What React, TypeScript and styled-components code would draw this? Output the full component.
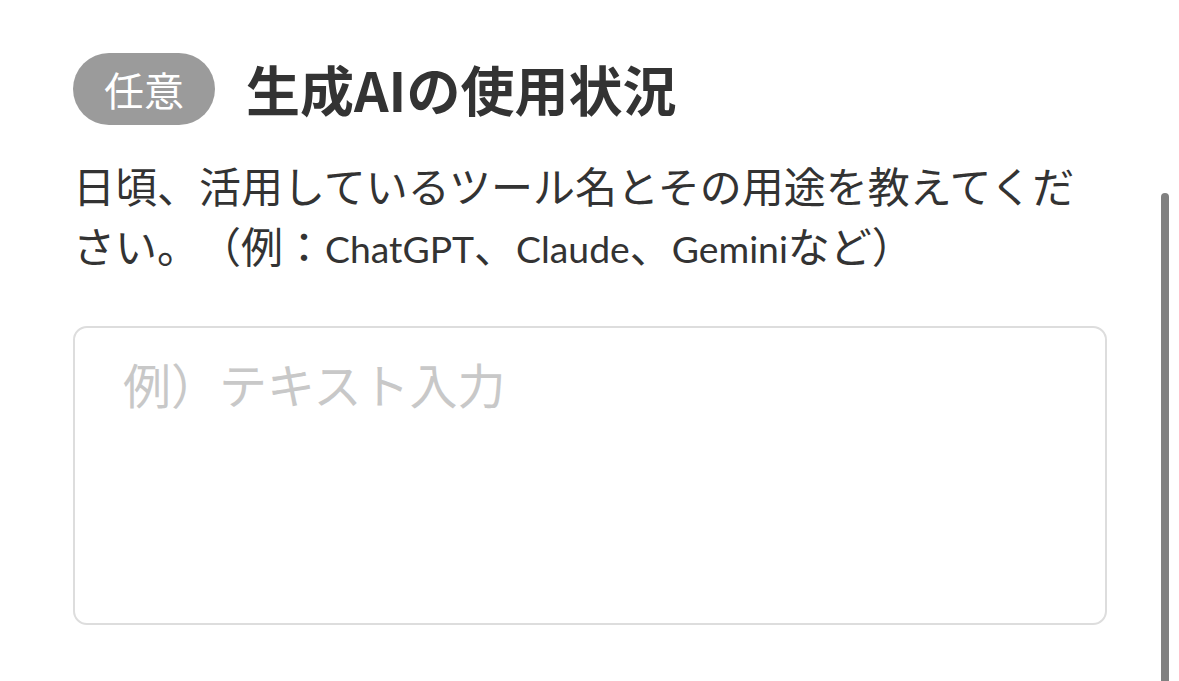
import React from "react";
import styled, { createGlobalStyle } from "styled-components";

const GlobalStyle = createGlobalStyle`
  html, body {
    margin: 0;
    padding: 0;
    background: #ffffff;
    font-family: "Noto Sans CJK JP", "Noto Sans", sans-serif;
  }
`;

const Page = styled.div`
  position: relative;
  width: 1179px;
  height: 681px;
  overflow: hidden;
  box-sizing: border-box;
  padding: 53px 0 0 73px;
`;

const Header = styled.div`
  display: flex;
  align-items: center;
  gap: 31px;
`;

const Badge = styled.span`
  display: inline-flex;
  align-items: center;
  justify-content: center;
  height: 72px;
  width: 142px;
  border-radius: 36px;
  background: #9b9b9b;
  color: #ffffff;
  font-size: 40px;
  line-height: 1;
`;

const Title = styled.h2`
  margin: 0;
  font-size: 54px;
  font-weight: 700;
  color: #333333;
  line-height: 1;
`;

const Description = styled.p`
  margin: 30px 0 0 0;
  width: 1030px;
  font-size: 42px;
  line-height: 60px;
  color: #333333;
  text-spacing-trim: space-all;
`;

const Line = styled.span`
  display: block;
  white-space: nowrap;
`;

// latin words in the reference are set in a narrow geometric face
const Latin = styled.span`
  font-family: "Lato", "Noto Sans", sans-serif;
  font-size: 37.3px;
`;

const TextArea = styled.textarea`
  display: block;
  box-sizing: border-box;
  margin-top: 47px;
  width: 1034px;
  height: 299px;
  padding: 19px 48px;
  border: 2px solid #dddddd;
  border-radius: 14px;
  resize: none;
  outline: none;
  font-family: inherit;
  font-size: 48px;
  line-height: 1.5;
  color: #333333;
  background: #ffffff;

  &::placeholder {
    color: #c8c8c8;
  }
`;

const ScrollThumb = styled.div`
  position: absolute;
  top: 193px;
  right: 10px;
  bottom: 0;
  width: 8px;
  border-radius: 4px 4px 0 0;
  background: #808080;
`;

export default function App() {
  return (
    <>
      <GlobalStyle />
      <Page>
        <Header>
          <Badge>任意</Badge>
          <Title>生成AIの使用状況</Title>
        </Header>
        <Description>
          <Line>日頃、活用しているツール名とその用途を教えてくだ</Line>
          <Line>
            さい。（例：<Latin>ChatGPT</Latin>、<Latin>Claude</Latin>、
            <Latin>Gemini</Latin>など）
          </Line>
        </Description>
        <TextArea placeholder="例）テキスト入力" />
        <ScrollThumb />
      </Page>
    </>
  );
}
